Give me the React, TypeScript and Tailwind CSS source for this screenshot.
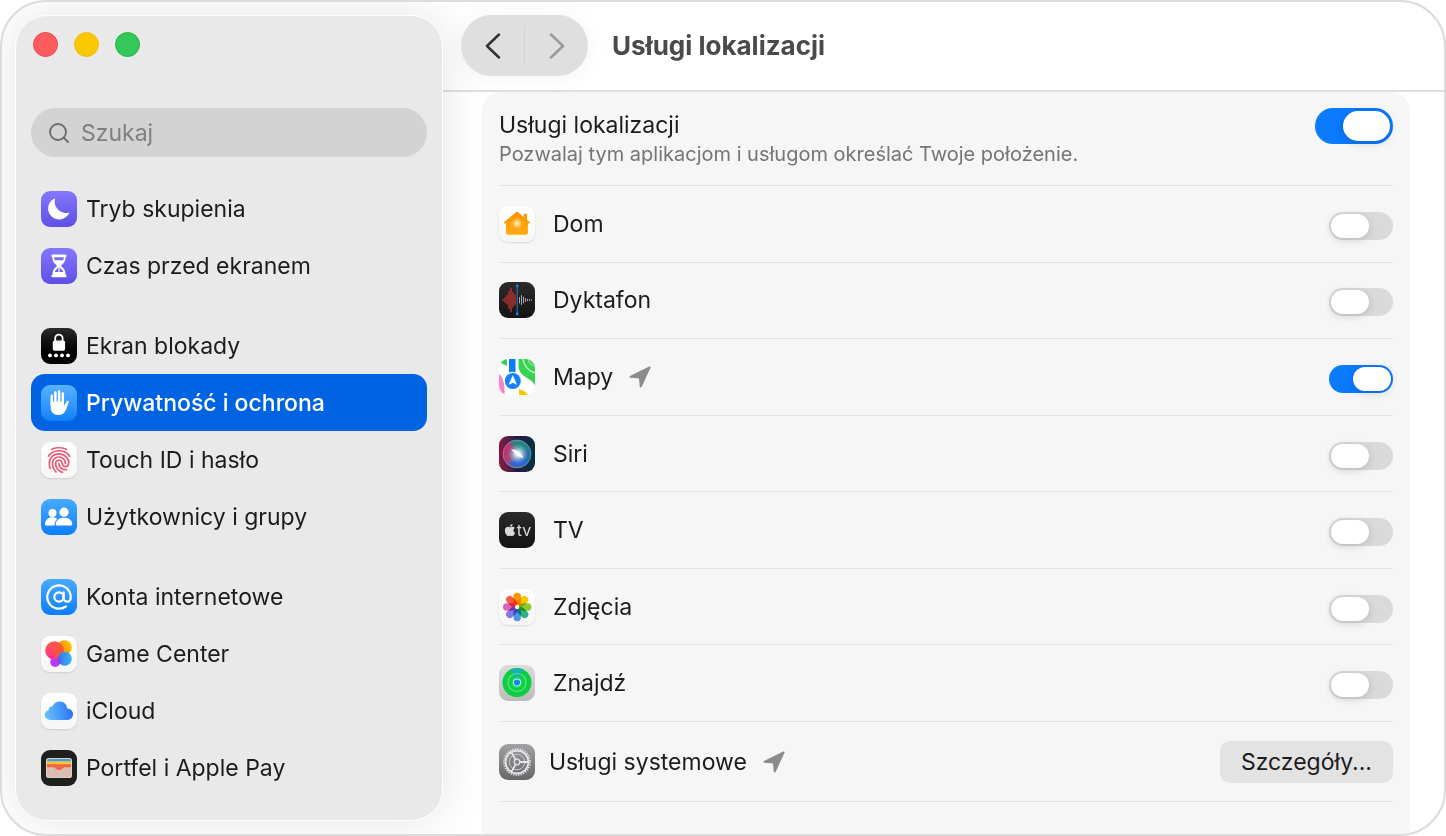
import { useState, type ReactNode } from "react";
import { AtSign, Search } from "lucide-react";
import { FaApple } from "react-icons/fa";
import { IoFingerPrint } from "react-icons/io5";

/* ---------- app tiles ---------- */

function Tile({ className, children }: { className: string; children: ReactNode }) {
  return (
    <span
      aria-hidden="true"
      className={`flex size-9 shrink-0 items-center justify-center overflow-hidden rounded-[9px] ${className}`}
    >
      {children}
    </span>
  );
}

function Art({ children }: { children: ReactNode }) {
  return (
    <svg viewBox="0 0 36 36" className="size-9" fill="none">
      {children}
    </svg>
  );
}

const VIOLET = "bg-linear-to-b from-[#8577fb] to-[#5f4ee8]";
const AZURE = "bg-linear-to-b from-[#45abff] to-[#0a7dfa]";
const PAPER = "bg-linear-to-b from-white to-[#f6f6f6] shadow-[0_1px_2px_rgba(0,0,0,0.12)]";
const COAL = "bg-linear-to-b from-[#2b2b2c] to-[#141415]";

const FocusIcon = () => (
  <Tile className={VIOLET}>
    <Art>
      <path d="M14.2 7.2A11 11 0 1 0 28.4 21.4A11.4 11.4 0 0 1 14.2 7.2Z" fill="#fff" />
    </Art>
  </Tile>
);

const ScreenTimeIcon = () => (
  <Tile className={VIOLET}>
    <Art>
      <path
        d="M11.800 6.500h12.400c.8 0 1.400.6 1.400 1.300s-.4 1.200-1 1.300c-.1 4.300-1.700 6.200-3.900 7.800-.8.6-.8 1.300 0 1.900 2.200 1.600 3.800 3.600 3.900 7.900.6.100 1 .6 1 1.300s-.6 1.300-1.400 1.300H11.800c-.8 0-1.400-.6-1.400-1.300s.4-1.200 1-1.300c.1-4.300 1.700-6.300 3.900-7.900.8-.6.8-1.300 0-1.900-2.200-1.600-3.800-3.500-3.900-7.800-.6-.1-1-.6-1-1.300s.6-1.300 1.400-1.300Z"
        fill="#fff"
      />
      <path d="M13.200 9.200h9.600c0 1.200-.2 2.200-.5 3h-8.600c-.3-.8-.5-1.800-.5-3Z" fill="#7a6bf7" />
      <path d="M18 18.500c.5 1.800 3.800 3 4.400 5.600H13.600c.6-2.600 3.900-3.800 4.400-5.600Z" fill="#6e5ff1" />
      <path d="M18 19v4.500" stroke="#fff" strokeWidth="1.200" strokeLinecap="round" />
    </Art>
  </Tile>
);

const LockScreenIcon = () => (
  <Tile className="bg-linear-to-b from-[#2a2a2a] to-black">
    <Art>
      <path d="M14.200 13v-2.700a3.700 3.700 0 0 1 7.400 0V13" stroke="#fff" strokeWidth="1.800" />
      <rect x="11.800" y="12.500" width="12.300" height="10.300" rx="1.800" fill="#fff" />
      <g fill="#fff">
        <circle cx="9" cy="27.400" r="1.900" />
        <circle cx="15" cy="27.400" r="1.900" />
        <circle cx="21" cy="27.400" r="1.900" />
        <circle cx="27" cy="27.400" r="1.900" />
      </g>
    </Art>
  </Tile>
);

const PrivacyIcon = () => (
  <Tile className="bg-linear-to-b from-[#55b2ff] to-[#0f80f8]">
    <Art>
      <g stroke="#fff" strokeWidth="2.500" strokeLinecap="round">
        <path d="M10.800 19V10.800M14.400 18V7.600M18.100 18V6.500M21.800 18V8.400" />
      </g>
      <path
        d="M9.600 16.500h13.400v4.200l2.300-3.800c.6-1 1.300-1.500 2-1.100.7.300.6 1.100.3 2l-2.800 7.200c-1.400 3.300-3.800 5-7.400 5-5 0-7.800-3.200-7.800-8Z"
        fill="#fff"
      />
    </Art>
  </Tile>
);

const TouchIdIcon = () => (
  <Tile className={PAPER}>
    <IoFingerPrint className="size-7 text-[#ee5673]" />
  </Tile>
);

const UsersIcon = () => (
  <Tile className={AZURE}>
    <Art>
      <g fill="#fff">
        <circle cx="11.500" cy="13.900" r="4" />
        <path d="M4 25.200c0-4.300 3-7 7.400-7 2 0 3.600.6 4.700 1.600-1.700 1.700-2.500 4-2.500 6.800H5.300c-.9 0-1.300-.5-1.300-1.400Z" />
        <circle cx="23" cy="13.200" r="4.600" />
        <path d="M14.800 25.200c0-4 3.300-6.500 8.200-6.500s8.300 2.500 8.300 6.500c0 .9-.4 1.400-1.400 1.400H16.200c-1 0-1.400-.5-1.400-1.400Z" />
      </g>
    </Art>
  </Tile>
);

const AccountsIcon = () => (
  <Tile className={AZURE}>
    <AtSign className="size-7 text-white" strokeWidth={1.9} />
  </Tile>
);

const GameCenterIcon = () => (
  <Tile className={PAPER}>
    <Art>
      <defs>
        <linearGradient id="gc-a" x1="0.3" y1="0" x2="0.4" y2="1">
          <stop offset="0" stopColor="#ff5a3d" />
          <stop offset="1" stopColor="#fb2f9b" />
        </linearGradient>
        <linearGradient id="gc-b" x1="0" y1="0.6" x2="1" y2="0.2">
          <stop offset="0" stopColor="#ff7a00" />
          <stop offset="1" stopColor="#ffcc00" />
        </linearGradient>
        <linearGradient id="gc-c" x1="0" y1="0" x2="1" y2="0">
          <stop offset="0" stopColor="#3f6ff2" />
          <stop offset="1" stopColor="#35b4f5" />
        </linearGradient>
      </defs>
      <circle cx="23.500" cy="11.500" r="7.300" fill="url(#gc-b)" />
      <circle cx="14.200" cy="26" r="5" fill="#b63df0" />
      <circle cx="13.500" cy="14.500" r="9.300" fill="url(#gc-a)" />
      <path d="M16.500 9a7.300 7.300 0 0 1 6.300 7.500c-.3 2.500-3 5.400-7 5.800a8 8 0 0 1 .7-13.300Z" fill="#ff5a1f" opacity="0.700" />
      <circle cx="23.800" cy="22.800" r="7" fill="url(#gc-c)" />
      <path d="M17 21a7 7 0 0 1 2.200 7.200A7 7 0 0 1 17 21Z" fill="#6a4ae8" />
    </Art>
  </Tile>
);

const CloudIcon = () => (
  <Tile className={PAPER}>
    <Art>
      <defs>
        <linearGradient id="ic-a" x1="0" y1="0.600" x2="1" y2="0.500">
          <stop offset="0" stopColor="#6fc0fa" />
          <stop offset="0.600" stopColor="#3f95f7" />
          <stop offset="1" stopColor="#2f6df0" />
        </linearGradient>
      </defs>
      <path
        d="M9.700 27c-3.400 0-6-2.200-6-5.200 0-2.500 1.600-4.300 3.900-4.900.1-2.200 2-3.800 4-3.600C12.800 10.300 15.500 8.400 18.700 8.400c4.200 0 7.300 3.200 7.600 7.200 3.300.1 5.700 2.500 5.700 5.600 0 3.300-2.500 5.800-5.900 5.800Z"
        fill="url(#ic-a)"
      />
    </Art>
  </Tile>
);

const WalletIcon = () => (
  <Tile className="bg-[#1f1f1e]">
    <Art>
      <rect x="5" y="8" width="26" height="20" rx="2.500" fill="#d8d2c6" />
      <path d="M6 11.500V11a2 2 0 0 1 2-2h20a2 2 0 0 1 2 2v.5Z" fill="#3f9fd8" />
      <rect x="6" y="11.500" width="24" height="2.800" fill="#ffc033" />
      <rect x="6" y="14.200" width="24" height="6" fill="#f2663f" />
      <path
        d="M6 17.300h6.200c1 0 1.500.4 2.300 1.300 1 1.100 2 1.700 3.500 1.700s2.500-.6 3.500-1.700c.8-.9 1.300-1.300 2.300-1.300H30V25a2 2 0 0 1-2 2H8a2 2 0 0 1-2-2Z"
        fill="#dcbdb4"
      />
    </Art>
  </Tile>
);

const HomeIcon = () => (
  <Tile className={PAPER}>
    <Art>
      <defs>
        <linearGradient id="home-a" x1="0" y1="0" x2="0" y2="1">
          <stop offset="0" stopColor="#ff9000" />
          <stop offset="1" stopColor="#ffae0c" />
        </linearGradient>
      </defs>
      <path
        d="M17 6.300c.7-.6 1.300-.6 2 0l5.600 4.600V8.500c0-.5.3-.8.800-.8h1.800c.5 0 .8.300.8.800v5.300l2.700 2.200c.8.700.4 1.600-.5 1.600h-1.300v9.200c0 1.300-.7 2-2 2H9.100c-1.300 0-2-.7-2-2v-9.200H5.800c-.9 0-1.300-.9-.5-1.600Z"
        fill="url(#home-a)"
      />
      <path d="M18 10.500l7 5.700v9.500H11v-9.500Z" fill="#ffa61a" />
      <circle cx="18" cy="17.500" r="4" fill="#ffc95c" />
      <circle cx="18" cy="17.500" r="1.700" fill="#fff1c4" />
    </Art>
  </Tile>
);

const VoiceMemosIcon = () => (
  <Tile className={COAL}>
    <Art>
      <path
        d="M4 17.500v1M6 16v4M8 13.500v8.500M10 9.500v17M12 6.500v23M14 10.500v14.500M16 13v9.500"
        stroke="#c5342f"
        strokeWidth="1.300"
        strokeLinecap="round"
      />
      <path
        d="M20.500 15.500v5.500M22.500 13.500v9M24.500 15v6M26.500 16.500v3M28.500 17.300v1.500M30.500 17.500v1M32.500 17.700v.6"
        stroke="#a9a9ab"
        strokeWidth="1"
        strokeLinecap="round"
      />
      <path d="M18.200 4v28" stroke="#2b7fd0" strokeWidth="1" />
      <circle cx="18.200" cy="4" r="1.400" fill="#2b7fd0" />
      <circle cx="18.200" cy="32" r="1.400" fill="#2b7fd0" />
    </Art>
  </Tile>
);

const MapsIcon = () => (
  <Tile className="bg-white">
    <Art>
      <path d="M2 0h6v7L0 3V0Z" fill="#3ccb58" />
      <path d="M19.500 0H36v27C34 19 21 19 19.500 8Z" fill="#39d353" />
      <path d="M24 0c1 8 6 12 12 14" stroke="#b5f2bb" strokeWidth="1.600" />
      <path d="M29 0c1 4 3 6 7 7.500" stroke="#8be897" strokeWidth="1.200" />
      <path d="M0 15c4 3 6 9 5.500 21H0Z" fill="#f784c8" />
      <path d="M20 36v-6c4 1 7 3 9.500 6Z" fill="#ffc400" />
      <path d="M10 0h6.500v14H10Z" fill="#0a7dfa" />
      <circle cx="13.800" cy="22" r="9.200" fill="#fff" />
      <circle cx="13.800" cy="22" r="8" fill="#1683fb" />
      <path d="M13.800 16l4.200 10-4.200-2.200L9.600 26Z" fill="#fff" />
    </Art>
  </Tile>
);

const SiriIcon = () => (
  <Tile className="bg-linear-to-r from-[#8c1040] via-[#1f1a48] to-[#05303a]">
    <Art>
      <defs>
        <radialGradient id="siri-a" cx="0.540" cy="0.500" r="0.420">
          <stop offset="0" stopColor="#fff" />
          <stop offset="0.300" stopColor="#dff3ff" stopOpacity="0.800" />
          <stop offset="1" stopColor="#7fb7de" stopOpacity="0" />
        </radialGradient>
        <linearGradient id="siri-b" x1="0" y1="0.400" x2="1" y2="0.600">
          <stop offset="0" stopColor="#d02a68" />
          <stop offset="0.400" stopColor="#8c5a86" />
          <stop offset="1" stopColor="#0c79a8" />
        </linearGradient>
      </defs>
      <circle cx="18" cy="18" r="14" fill="url(#siri-b)" />
      <path d="M11 6a14 14 0 0 1 20 8c-6-1-9 1-12 3-2-4-4-7-8-11Z" fill="#168f7c" opacity="0.800" />
      <path d="M9 27c5-1 8-4 10-8 3 3 7 5 11 5a14 14 0 0 1-21 3Z" fill="#2267df" opacity="0.800" />
      <circle cx="18" cy="18" r="12" fill="url(#siri-a)" />
      <path d="M12 13.500c4-.5 6.500.8 9 3.500 1.500 1.500 2.500 3 3.500 5-3-.5-5-1.300-7-3s-3-3.500-5.500-5.500Z" fill="#fff" opacity="0.900" />
      <circle cx="18" cy="18" r="14" stroke="#8fb5bd" strokeOpacity="0.600" strokeWidth="0.900" />
    </Art>
  </Tile>
);

const TvIcon = () => (
  <Tile className={COAL}>
    <span className="flex items-center text-[#dadada]">
      <FaApple className="size-3.5" />
      <span className="font-['Inter'] text-base leading-4">tv</span>
    </span>
  </Tile>
);

const PETALS = ["#ff9500", "#fccb00", "#8fce2e", "#2fb58a", "#4b9be8", "#8b7be6", "#e562b8", "#fb5a4b"];

const PhotosIcon = () => (
  <Tile className={PAPER}>
    <Art>
      {PETALS.map((color, i) => (
        <rect
          key={color}
          x="14.500"
          y="3.800"
          width="7.400"
          height="12.400"
          rx="3.700"
          fill={color}
          transform={`rotate(${i * 45} 18.200 18)`}
          className="mix-blend-multiply"
        />
      ))}
      <circle cx="18.200" cy="18" r="1.900" fill="#fff" />
    </Art>
  </Tile>
);

const FindMyIcon = () => (
  <Tile className="bg-linear-to-b from-[#dcdcda] to-[#bcbcba]">
    <Art>
      <circle cx="18" cy="17.500" r="14.500" fill="#0fce46" />
      <path d="M18 17.500L11.500 4.600a14.500 14.500 0 0 1 13 0Z" fill="#15b4b0" />
      <circle cx="18" cy="17.500" r="9" stroke="#5be97c" strokeWidth="1.200" />
      <circle cx="18" cy="17.500" r="5.600" fill="#1ed657" />
      <circle cx="18" cy="17.500" r="4" fill="#b8f3e0" />
      <circle cx="18" cy="17.500" r="3.100" fill="#1583f3" />
    </Art>
  </Tile>
);

const GearIcon = () => (
  <Tile className="bg-linear-to-b from-[#a2a2a4] to-[#67676a]">
    <Art>
      <circle cx="18" cy="18" r="13" stroke="#e6e6e8" strokeWidth="1.800" strokeDasharray="1.300 1.253" />
      <circle cx="18" cy="18" r="11.400" stroke="#e6e6e8" strokeWidth="1.700" />
      <circle cx="18" cy="18" r="7.800" stroke="#c6c6c9" strokeWidth="1" />
      <circle cx="18" cy="18" r="2.800" fill="#8a8a8c" stroke="#e6e6e8" strokeWidth="1.200" />
      <path d="M21 18h8M16.500 15.400l-4-7M16.500 20.600l-4 7" stroke="#e6e6e8" strokeWidth="1.800" />
    </Art>
  </Tile>
);

const LocationArrow = () => (
  <svg viewBox="0 0 22 22" className="size-[22px] shrink-0" aria-hidden="true">
    <path
      d="M20.600 1.400L1.500 10.800l9.400.8.800 8.900Z"
      fill="#8b8b8b"
      stroke="#8b8b8b"
      strokeWidth="2"
      strokeLinejoin="round"
    />
  </svg>
);

/* ---------- controls ---------- */

const SWITCH =
  "relative shrink-0 cursor-pointer appearance-none rounded-full bg-[#dadada] transition-colors checked:bg-[#0a7aff] before:absolute before:rounded-full before:bg-white before:shadow-[0_2px_8px_rgba(0,0,0,0.16)] before:transition-all before:content-['']";
const LARGE =
  "h-9 w-[78px] before:top-[3px] before:left-[3px] before:h-[30px] before:w-[47px] checked:before:left-7";
const SMALL =
  "mt-1 h-7 w-16 before:top-[2px] before:left-[2px] before:h-6 before:w-[38px] checked:before:left-6";

function Switch({ id, initial = false, large = false }: { id: string; initial?: boolean; large?: boolean }) {
  const [on, setOn] = useState(initial);
  return (
    <input
      id={id}
      type="checkbox"
      role="switch"
      checked={on}
      onChange={(e) => setOn(e.target.checked)}
      className={`${SWITCH} ${large ? LARGE : SMALL}`}
    />
  );
}

/* ---------- data ---------- */

const GROUPS = [
  [
    { name: "Tryb skupienia", icon: <FocusIcon /> },
    { name: "Czas przed ekranem", icon: <ScreenTimeIcon /> },
  ],
  [
    { name: "Ekran blokady", icon: <LockScreenIcon /> },
    { name: "Prywatność i ochrona", icon: <PrivacyIcon />, active: true },
    { name: "Touch ID i hasło", icon: <TouchIdIcon /> },
    { name: "Użytkownicy i grupy", icon: <UsersIcon /> },
  ],
  [
    { name: "Konta internetowe", icon: <AccountsIcon /> },
    { name: "Game Center", icon: <GameCenterIcon /> },
    { name: "iCloud", icon: <CloudIcon /> },
    { name: "Portfel i Apple Pay", icon: <WalletIcon /> },
  ],
];

const APPS = [
  { id: "dom", name: "Dom", icon: <HomeIcon /> },
  { id: "dyktafon", name: "Dyktafon", icon: <VoiceMemosIcon /> },
  { id: "mapy", name: "Mapy", icon: <MapsIcon />, on: true, recent: true },
  { id: "siri", name: "Siri", icon: <SiriIcon /> },
  { id: "tv", name: "TV", icon: <TvIcon /> },
  { id: "zdjecia", name: "Zdjęcia", icon: <PhotosIcon /> },
  { id: "znajdz", name: "Znajdź", icon: <FindMyIcon /> },
];

/* ---------- page ---------- */

function Sidebar() {
  return (
    <aside className="relative z-10 my-[13px] ml-[13px] flex w-[428px] shrink-0 flex-col rounded-[32px] border border-white bg-[#e9e9e9] px-[15px] pb-[23px] shadow-[0_0_48px_rgba(0,0,0,0.11)]">
      <div className="flex gap-4 pt-4 pl-0.5">
        <button type="button" aria-label="Zamknij" className="size-[25px] rounded-full border border-[#ec4450] bg-[#ff5c60]" />
        <button type="button" aria-label="Zminimalizuj" className="size-[25px] rounded-full border border-[#f3bb10] bg-[#fac800]" />
        <button type="button" aria-label="Powiększ" className="size-[25px] rounded-full border border-[#22b548] bg-[#34c759]" />
      </div>
      <label className="mt-[51px] flex h-[49px] shrink-0 items-center gap-2.5 rounded-full bg-[#d3d3d3] px-4">
        <Search className="size-6 shrink-0 text-[#6b6b6b]" strokeWidth={1.9} aria-hidden="true" />
        <input
          type="search"
          aria-label="Szukaj"
          placeholder="Szukaj"
          className="w-full min-w-0 bg-transparent text-[23px] outline-none placeholder:text-[#808080]"
        />
      </label>
      <nav className="mt-[23px] flex flex-col gap-[23px]">
        {GROUPS.map((group, i) => (
          <ul key={i}>
            {group.map((item) => (
              <li key={item.name}>
                <a
                  href="#"
                  aria-current={item.active ? "page" : undefined}
                  className={`flex h-[57px] items-center gap-[9px] rounded-[14px] px-2.5 ${
                    item.active ? "bg-[#0063e1] font-medium text-white" : ""
                  }`}
                >
                  {item.icon}
                  <span className="whitespace-nowrap">{item.name}</span>
                </a>
              </li>
            ))}
          </ul>
        ))}
      </nav>
    </aside>
  );
}

export default function App() {
  return (
    <div className="flex min-h-screen overflow-hidden rounded-[46px] border-2 border-[#dcdcdc] bg-white font-['Inter','Noto_Sans',sans-serif] text-[23px] leading-7 text-[#1c1c1c]">
      <Sidebar />
      <main className="flex min-w-0 flex-1 flex-col">
        <header className="flex h-[90px] shrink-0 items-start border-b-2 border-[#dfdfdf] pt-[13px] pl-[18px]">
          <div className="relative z-20 flex h-[61px] w-[127px] items-center rounded-full bg-[#dfdfdf] shadow-[0_2px_24px_rgba(0,0,0,0.05)]">
            <button type="button" aria-label="Wstecz" className="flex h-full flex-1 items-center justify-center">
              <svg viewBox="0 0 16 26" className="h-[26px] w-4" fill="none" aria-hidden="true">
                <path d="M14 1.500L2 13l12 11.500" stroke="#333" strokeWidth="2.500" strokeLinecap="round" strokeLinejoin="round" />
              </svg>
            </button>
            <span className="h-10 w-px bg-[#d3d3d3]" />
            <button type="button" aria-label="Dalej" className="flex h-full flex-1 items-center justify-center">
              <svg viewBox="0 0 16 26" className="h-[26px] w-4" fill="none" aria-hidden="true">
                <path d="M2 1.500L14 13L2 24.500" stroke="#9a9a9a" strokeWidth="2.500" strokeLinecap="round" strokeLinejoin="round" />
              </svg>
            </button>
          </div>
          <h1 className="ml-6 flex h-[61px] items-center text-[26px] font-bold text-[#4a4a4a]">Usługi lokalizacji</h1>
        </header>

        <section className="mr-[34px] ml-[39px] flex flex-1 flex-col rounded-t-[20px] bg-[#f6f6f6] px-[17px] pb-8">
          <div className="flex h-[94px] shrink-0 items-start justify-between border-b border-[#e0e0e0] pt-4">
            <div className="pt-[3px]">
              <label htmlFor="lokalizacja" className="block">
                Usługi lokalizacji
              </label>
              <p className="text-[20px] leading-[30px] text-[#757575]">
                Pozwalaj tym aplikacjom i usługom określać Twoje położenie.
              </p>
            </div>
            <Switch id="lokalizacja" large initial />
          </div>

          <ul className="flex flex-1 flex-col">
            {APPS.map((app) => (
              <li key={app.id} className="flex flex-1 items-center border-b border-[#e4e4e4]">
                {app.icon}
                <label htmlFor={app.id} className="ml-[18px]">
                  {app.name}
                </label>
                <span className="ml-4 flex flex-1">{app.recent && <LocationArrow />}</span>
                <Switch id={app.id} initial={app.on} />
              </li>
            ))}
          </ul>

          <div className="flex h-20 shrink-0 items-center border-b border-[#e4e4e4]">
            <GearIcon />
            <span className="ml-3.5">Usługi systemowe</span>
            <span className="ml-4 flex flex-1">
              <LocationArrow />
            </span>
            <button type="button" className="h-[42px] rounded-[10px] bg-[#e3e3e3] px-[21px]">
              Szczegóły...
            </button>
          </div>
        </section>
      </main>
    </div>
  );
}
